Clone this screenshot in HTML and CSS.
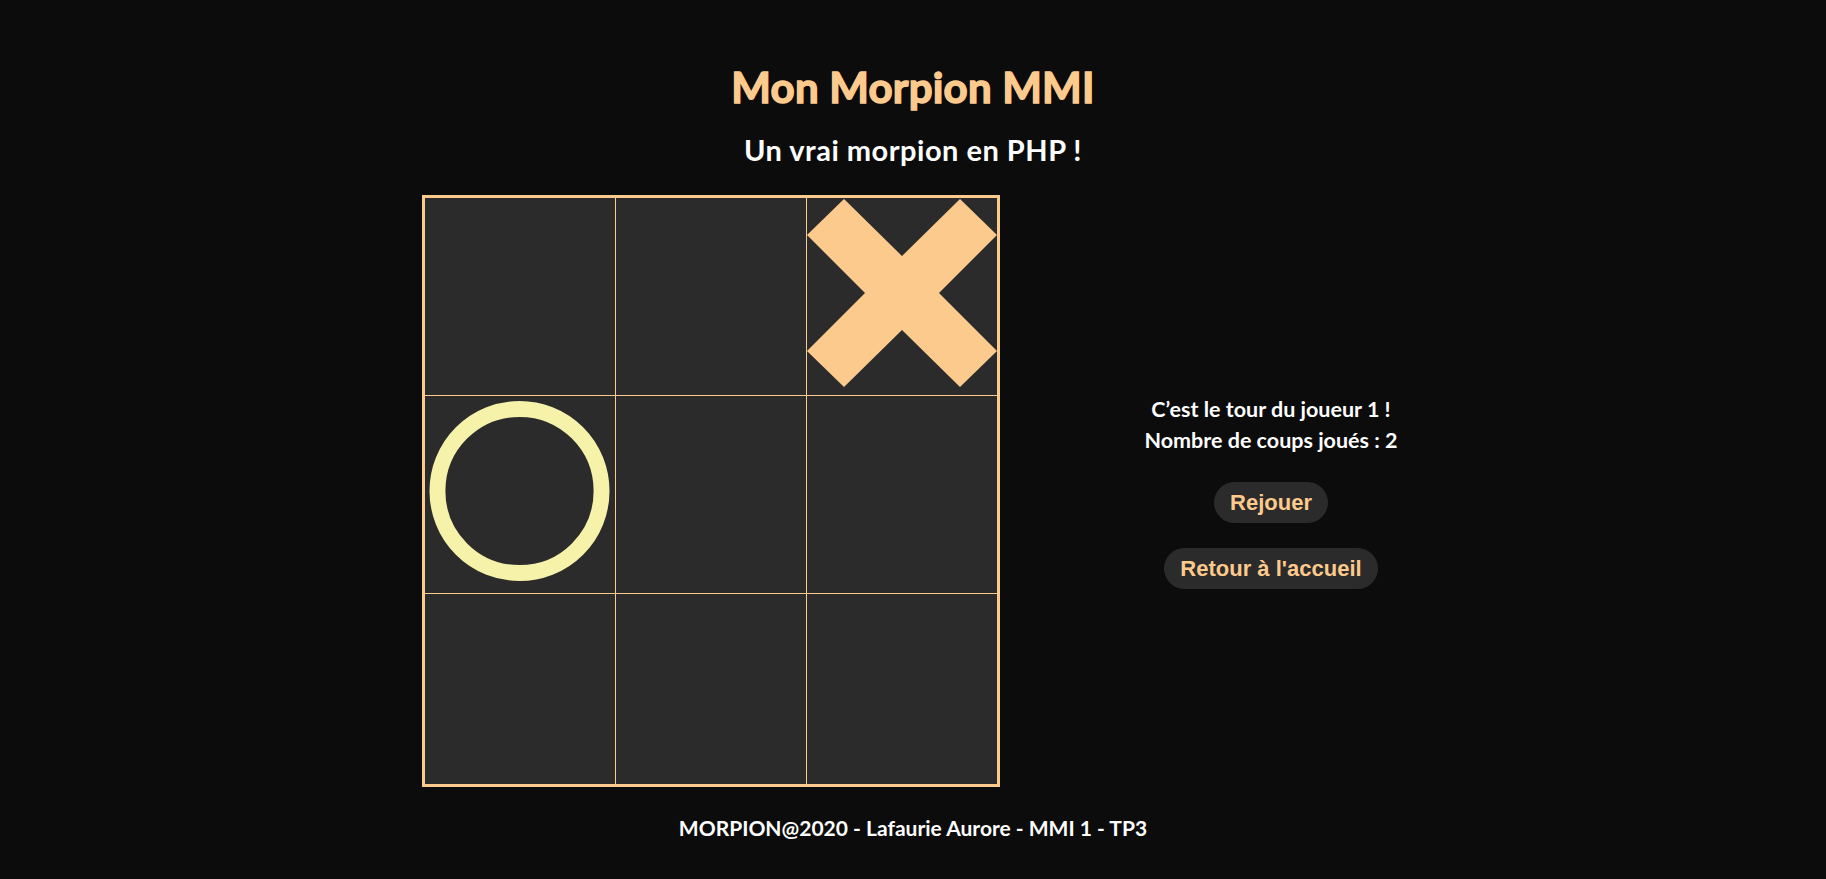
FILE: index.html
```html
<!DOCTYPE html>
<html lang="fr">
<head>
<meta charset="utf-8">
<title>Mon Morpion MMI</title>
<link rel="stylesheet" href="styles.css">
</head>
<body>
<header class="header">
  <h1 class="title">Mon Morpion MMI</h1>
  <h2 class="subtitle">Un vrai morpion en PHP !</h2>
</header>
<main class="game">
  <div class="board">
    <div class="cell"></div>
    <div class="cell"></div>
    <div class="cell">
      <svg class="mark-x" width="190" height="188" viewBox="0 0 190 188"><polygon points="0,36 37,0 95,57 153,0 190,36 132,94 190,152 153,188 95,131 37,188 0,152 58,94" fill="#fdca8d"/></svg>
    </div>
    <div class="cell">
      <svg class="mark-o" width="190" height="190" viewBox="0 0 190 190"><circle cx="94" cy="94" r="82.5" fill="none" stroke="#f6f2aa" stroke-width="16"/></svg>
    </div>
    <div class="cell"></div>
    <div class="cell"></div>
    <div class="cell"></div>
    <div class="cell"></div>
    <div class="cell"></div>
  </div>
  <div class="panel">
    <p class="status">C’est le tour du joueur 1 !<br>Nombre de coups joués : 2</p>
    <a class="btn" href="#">Rejouer</a>
    <a class="btn" href="#">Retour à l'accueil</a>
  </div>
</main>
<footer class="footer">MORPION@2020 - Lafaurie Aurore - MMI 1 - TP3</footer>
</body>
</html>
```
FILE: styles.css
```css
html, body {
  margin: 0;
  padding: 0;
}
body {
  background: #0c0c0c;
  color: #ffffff;
  font-family: "Lato", "Open Sans", sans-serif;
  height: 879px;
  overflow: hidden;
}
.header {
  display: flex;
  flex-direction: column;
  align-items: center;
  padding-top: 62px;
}
.title {
  margin: 0;
  font-family: "Lato", sans-serif;
  font-size: 42px;
  line-height: 50px;
  font-weight: 700;
  -webkit-text-stroke: 1.4px #fdca8d;
  letter-spacing: 0.2px;
  color: #fdca8d;
}
.subtitle {
  margin: 20px 0 0;
  font-size: 29px;
  line-height: 35px;
  font-weight: 700;
  letter-spacing: 0.5px;
  color: #ffffff;
}
.game {
  display: flex;
  justify-content: center;
  align-items: center;
  gap: 138px;
  margin-top: 28px;
}
.board {
  display: grid;
  grid-template-columns: 190px 190px 190px;
  grid-template-rows: 197px 197px 190px;
  gap: 1px;
  background: #fdca8d;
  border: 3px solid #fdca8d;
}
.cell {
  background: #2b2b2b;
  display: flex;
  align-items: flex-start;
  justify-content: flex-start;
}
.mark-x {
  margin-top: 1px;
}
.mark-o {
  margin-top: 1px;
  margin-left: 1px;
}
.panel {
  width: 266px;
  display: flex;
  flex-direction: column;
  align-items: center;
}
.status {
  margin: 0 0 26px;
  font-size: 21.5px;
  line-height: 31px;
  font-weight: 700;
  text-align: center;
  white-space: nowrap;
}
.btn {
  display: inline-block;
  height: 41px;
  line-height: 41px;
  padding: 0 16px;
  border-radius: 21px;
  background: #2b2b2b;
  color: #fdca8d;
  font-family: "Liberation Sans", Arial, sans-serif;
  font-weight: 700;
  font-size: 22px;
  text-decoration: none;
}
.btn + .btn {
  margin-top: 25px;
}
.footer {
  margin-top: 27px;
  text-align: center;
  font-size: 21px;
  line-height: 28px;
  font-weight: 700;
}
```
